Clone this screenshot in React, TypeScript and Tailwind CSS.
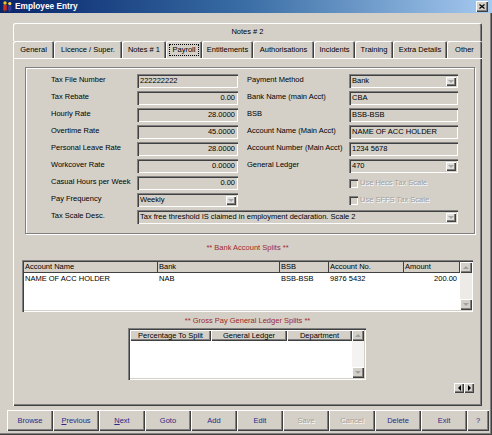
import React from "react";

const raised = "shadow-[inset_1px_1px_0_#fff,inset_-1px_-1px_0_#404040,inset_-2px_-2px_0_#808080]";
const sunken = "shadow-[inset_1px_1px_0_#808080,inset_2px_2px_0_#404040,inset_-1px_-1px_0_#fff,inset_-2px_-2px_0_#d4d0c8]";
const tabEdge = "shadow-[inset_1px_1px_0_#fff,inset_-1px_0_0_#404040,inset_-2px_0_0_#808080]";

type Dir = "up" | "down" | "left" | "right";

function Tri({ dir, color = "#000" }: { dir: Dir; color?: string }) {
  const vertical = dir === "up" || dir === "down";
  const pts = { up: "0,3 3,0 6,3", down: "0,0 6,0 3,3", left: "3,0 3,6 0,3", right: "0,0 0,6 3,3" }[dir];
  return (
    <svg width={vertical ? 6 : 3} height={vertical ? 3 : 6} viewBox={vertical ? "0 0 6 3" : "0 0 3 6"}>
      <polygon points={pts} fill={color} />
    </svg>
  );
}

function Field({ value, right }: { value: string; right?: boolean }) {
  return (
    <div
      className={`h-[14px] bg-[#d4d0c8] ${sunken} flex items-center px-[3px] whitespace-nowrap overflow-hidden ${right ? "justify-end" : ""}`}
    >
      {value}
    </div>
  );
}

function Select({ value }: { value: string }) {
  return (
    <div className={`h-[14px] bg-[#d4d0c8] ${sunken} flex items-center pl-[3px] pr-[2px]`}>
      <span className="flex-1 truncate">{value}</span>
      <span className={`w-[10px] h-[9px] bg-[#e2e0dc] ${raised} flex items-center justify-center`}>
        <Tri dir="down" color="#a8a8a8" />
      </span>
    </div>
  );
}

function Check({ label }: { label: string }) {
  return (
    <div className="flex items-center gap-[2px] h-[14px]">
      <span className={`w-[9px] h-[9px] bg-[#d4d0c8] ${sunken}`} />
      <span className="text-[#a0a0a0] [text-shadow:1px_1px_0_#fff] whitespace-nowrap">{label}</span>
    </div>
  );
}

function Label({ children }: { children: React.ReactNode }) {
  return <div className="flex items-center pb-[2px] whitespace-nowrap">{children}</div>;
}

function ScrollBtn({ dir }: { dir: Dir }) {
  return (
    <div className={`w-[12px] h-[11px] bg-[#d4d0c8] ${raised} flex items-center justify-center shrink-0`}>
      <Tri dir={dir} color="#a0a0a0" />
    </div>
  );
}

const tabs = [
  { label: "General", w: "w-[41px]" },
  { label: "Licence / Super.", w: "w-[68px]" },
  { label: "Notes # 1", w: "w-[44px]" },
  { label: "Payroll", w: "w-[36px]" },
  { label: "Entitlements", w: "w-[51px]" },
  { label: "Authorisations", w: "w-[61px]" },
  { label: "Incidents", w: "w-[41px]" },
  { label: "Training", w: "w-[38px]" },
  { label: "Extra Details", w: "w-[54px]" },
  { label: "Other", w: "w-[35px]" },
];

const bankCols = [
  { label: "Account Name", w: "w-[134px]", value: "NAME OF ACC HOLDER" },
  { label: "Bank", w: "w-[122px]", value: "NAB" },
  { label: "BSB", w: "w-[49px]", value: "BSB-BSB" },
  { label: "Account No.", w: "w-[75px]", value: "9876 5432" },
  { label: "Amount", w: "w-[56px]", value: "200.00" },
];

const glCols = [
  { label: "Percentage To Split", w: "w-[81px]" },
  { label: "General Ledger", w: "w-[76px]" },
  { label: "Department", w: "w-[65px]" },
];

const buttons = [
  { label: "Browse" },
  { label: "Previous", key: "P", rest: "revious" },
  { label: "Next", key: "N", rest: "ext" },
  { label: "Goto" },
  { label: "Add" },
  { label: "Edit" },
  { label: "Save", disabled: true },
  { label: "Cancel", disabled: true },
  { label: "Delete" },
  { label: "Exit" },
];

export default function App() {
  return (
    <div className="w-[492px] h-[435px] bg-[#d4d0c8] flex flex-col overflow-hidden text-black text-[7.5px] leading-none font-['Liberation_Sans',Arial,sans-serif] shadow-[inset_-1px_-1px_0_#404040,inset_-2px_-2px_0_#808080]">
      {/* Title bar */}
      <div className="h-[13px] shrink-0 flex items-center bg-linear-to-r from-[#0a246a] via-[#3a6ea5] to-[#a6caf0] pl-[2px] pr-[4px]">
        <svg width="11" height="11" viewBox="0 0 11 11">
          <circle cx="3" cy="2" r="1.7" fill="#f2c21a" />
          <rect x="1.3" y="4" width="3.4" height="5.5" fill="#d42a1c" />
          <circle cx="7.8" cy="2.6" r="1.6" fill="#f6d84a" />
          <rect x="6.2" y="4.6" width="3.2" height="5" fill="#3a3a9a" />
          <rect x="2" y="9.5" width="1" height="1.5" fill="#6a3a10" />
          <rect x="7" y="9.5" width="1" height="1.5" fill="#6a3a10" />
        </svg>
        <span className="ml-[2px] text-white font-bold text-[8.3px]">Employee Entry</span>
        <div className={`ml-auto w-[12px] h-[11px] bg-[#d4d0c8] ${raised} flex items-center justify-center`}>
          <svg width="6" height="5" viewBox="0 0 6 5">
            <path d="M0.5 0.5 L5.5 4.5 M5.5 0.5 L0.5 4.5" stroke="#000" strokeWidth="1.2" />
          </svg>
        </div>
      </div>

      {/* Tab control */}
      <div className="ml-[13px] mt-[10px] w-[469px] flex flex-col">
        <div className={`h-[18px] ${tabEdge} rounded-t-[2px] flex items-center justify-center`}>Notes # 2</div>
        <div className="h-[17px] flex">
          {tabs.map((t) => (
            <div key={t.label} className={`${t.w} h-full ${tabEdge} rounded-t-[2px] flex items-center justify-center whitespace-nowrap`}>
              {t.label === "Payroll" ? (
                <span className="border border-dotted border-black px-[3px] h-[12px] flex items-center">Payroll</span>
              ) : (
                t.label
              )}
            </div>
          ))}
        </div>

        {/* Panel */}
        <div className={`h-[348px] ${raised} flex flex-col`}>
          {/* Group box */}
          <div className="ml-[12px] mt-[9px] w-[450px] h-[167px] border border-[#808080] shadow-[inset_1px_1px_0_#fff,1px_1px_0_#fff] pl-[25px] pt-[6px]">
            <div className="grid grid-cols-[86px_101px_9px_102px_109px] auto-rows-[14px] gap-y-[3px]">
              <Label>Tax File Number</Label>
              <Field value="222222222" />
              <div />
              <Label>Payment Method</Label>
              <Select value="Bank" />

              <Label>Tax Rebate</Label>
              <Field value="0.00" right />
              <div />
              <Label>Bank Name (main Acct)</Label>
              <Field value="CBA" />

              <Label>Hourly Rate</Label>
              <Field value="28.0000" right />
              <div />
              <Label>BSB</Label>
              <Field value="BSB-BSB" />

              <Label>Overtime Rate</Label>
              <Field value="45.0000" right />
              <div />
              <Label>Account Name (Main Acct)</Label>
              <Field value="NAME OF ACC HOLDER" />

              <Label>Personal Leave Rate</Label>
              <Field value="28.0000" right />
              <div />
              <Label>Account Number (Main Acct)</Label>
              <Field value="1234 5678" />

              <Label>Workcover Rate</Label>
              <Field value="0.0000" right />
              <div />
              <Label>General Ledger</Label>
              <Select value="470" />

              <Label>Casual Hours per Week</Label>
              <Field value="0.00" right />
              <div />
              <div />
              <Check label="Use Hecs Tax Scale" />

              <Label>Pay Frequency</Label>
              <Select value="Weekly" />
              <div />
              <div />
              <Check label="Use SFFS Tax Scale" />

              <Label>Tax Scale Desc.</Label>
              <div className="col-span-4">
                <Select value="Tax free threshold IS claimed in employment declaration. Scale 2" />
              </div>
            </div>
          </div>

          {/* Bank account splits */}
          <div className="h-[26px] pt-[2px] flex items-center justify-center text-[#a02828]">** Bank Account Splits **</div>
          <div className={`ml-[9px] w-[451px] h-[52px] bg-white ${sunken} p-[2px] flex`}>
            <div className="w-[436px] flex flex-col">
              <div className="h-[11px] flex bg-[#d4d0c8] shrink-0">
                {bankCols.map((c) => (
                  <div key={c.label} className={`${c.w} h-full border-r border-b border-[#404040] pl-[1px] flex items-center whitespace-nowrap`}>
                    {c.label}
                  </div>
                ))}
              </div>
              <div className="h-[12px] flex">
                {bankCols.map((c) => (
                  <div
                    key={c.label}
                    className={`${c.w} h-full flex items-center whitespace-nowrap ${c.label === "Amount" ? "justify-end pr-[3px]" : "pl-[1px]"}`}
                  >
                    {c.value}
                  </div>
                ))}
              </div>
            </div>
            <div className="w-[12px] flex flex-col bg-[#ecebe8]">
              <ScrollBtn dir="up" />
              <div className="flex-1" />
              <ScrollBtn dir="down" />
            </div>
          </div>

          {/* GL splits */}
          <div className="h-[16px] pt-[2px] flex items-center justify-center text-[#a02828]">** Gross Pay General Ledger Splits **</div>
          <div className={`ml-[115px] w-[238px] h-[52px] bg-white ${sunken} p-[2px] flex`}>
            <div className="w-[222px] flex flex-col">
              <div className="h-[11px] flex shrink-0">
                {glCols.map((c) => (
                  <div key={c.label} className={`${c.w} h-full bg-[#d4d0c8] ${raised} flex items-center justify-center whitespace-nowrap`}>
                    {c.label}
                  </div>
                ))}
              </div>
            </div>
            <div className="w-[12px] flex flex-col bg-[#f4f3f1]">
              <ScrollBtn dir="up" />
              <div className="flex-1" />
              <ScrollBtn dir="down" />
            </div>
          </div>

          {/* record nav */}
          <div className="mt-[3px] pr-[8px] flex justify-end">
            <div className={`w-[10px] h-[10px] ${raised} flex items-center justify-center`}>
              <Tri dir="left" />
            </div>
            <div className={`w-[10px] h-[10px] ${raised} flex items-center justify-center`}>
              <Tri dir="right" />
            </div>
          </div>
        </div>
      </div>

      {/* Bottom buttons */}
      <div className="ml-[7px] mt-[4px] h-[21px] flex">
        {buttons.map((b) => (
          <div
            key={b.label}
            className={`w-[46px] h-full ${raised} flex items-center justify-center ${b.disabled ? "text-[#a0a0a0] [text-shadow:1px_1px_0_#fff]" : "text-[#2a2a84]"}`}
          >
            {b.key ? (
              <span>
                <span className="underline">{b.key}</span>
                {b.rest}
              </span>
            ) : (
              b.label
            )}
          </div>
        ))}
        <div className={`w-[22px] h-full ${raised} flex items-center justify-center text-[#2a2a84]`}>?</div>
      </div>
    </div>
  );
}
